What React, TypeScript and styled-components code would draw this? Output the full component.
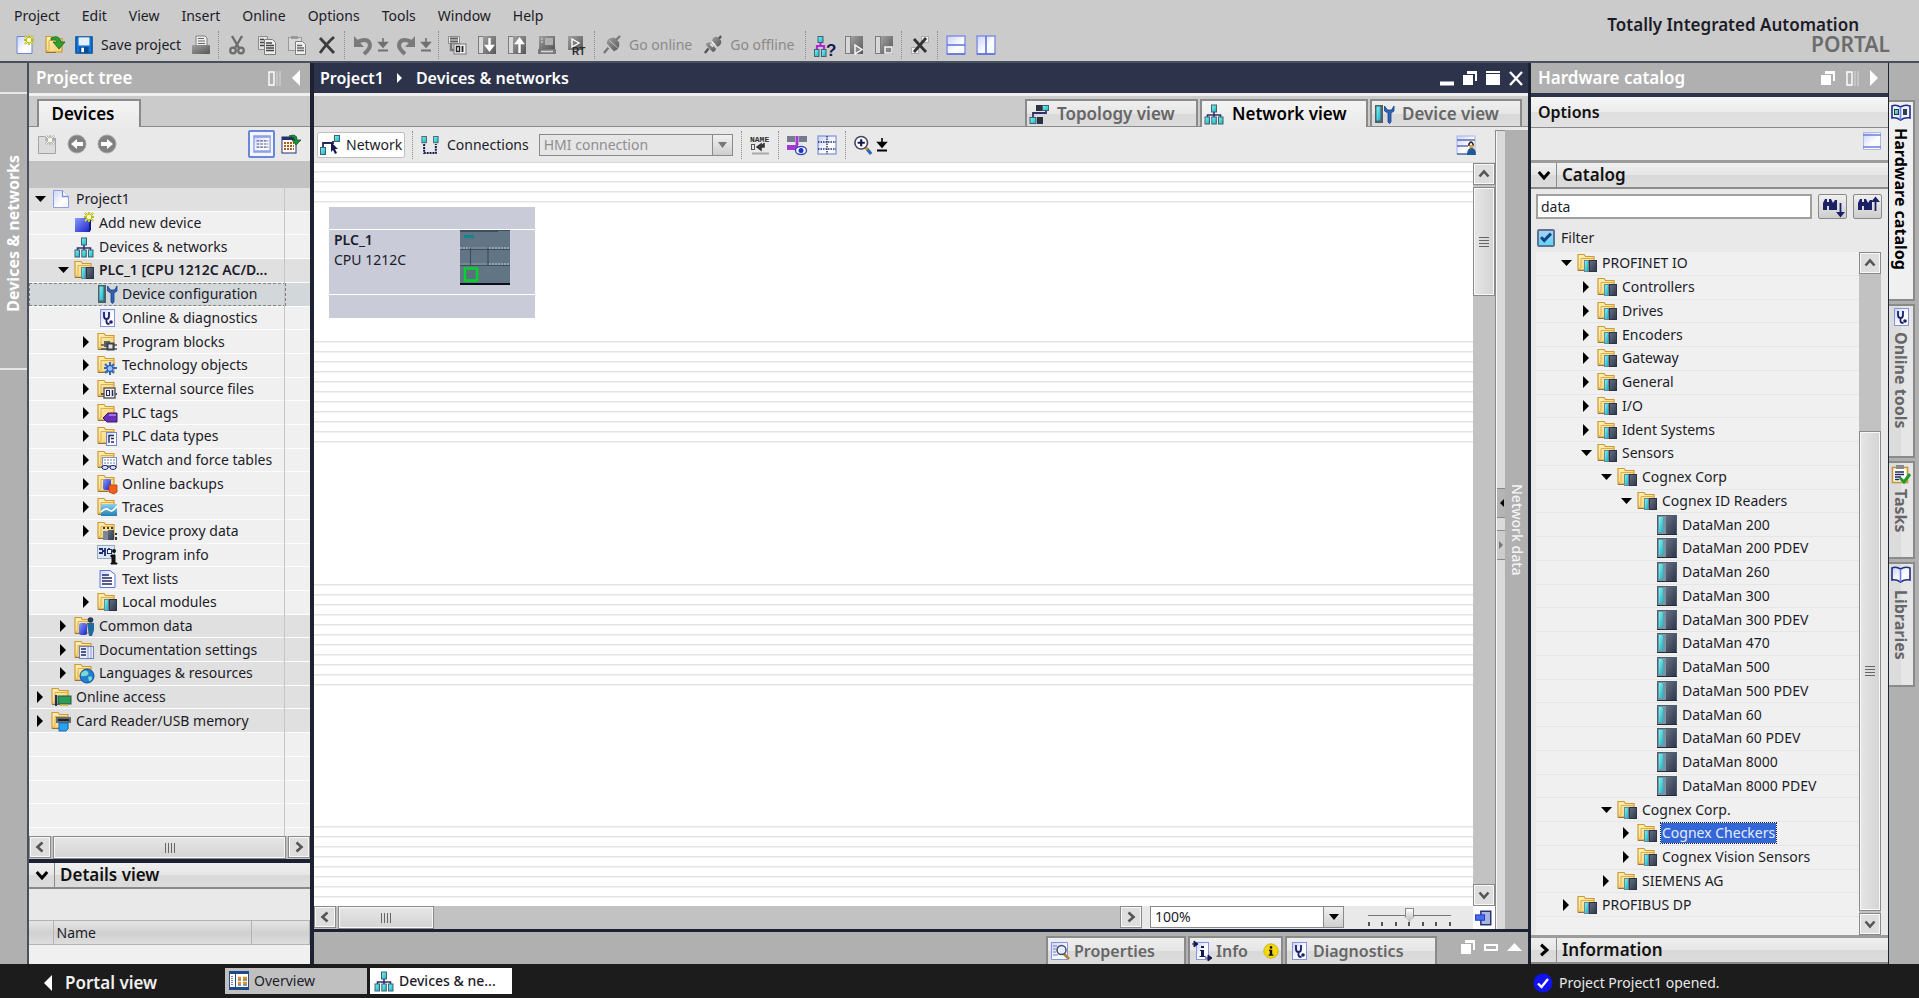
import React from "react";
import styled, { createGlobalStyle, css } from "styled-components";

/* ---------- theme ---------- */
const c = {
  header: "#cbcbcb",
  bar: "#b0b0b0",
  panel: "#e9e9e9",
  row: "#f0f0f0",
  group: "#e0e0e0",
  navy: "#2c334b",
  frame: "#1d2233",
  line: "#8a8a8a",
  ink: "#1c1c28",
  grey: "#666666",
  black: "#1c1c1c",
};

const Global = createGlobalStyle`
  *, *::before, *::after { box-sizing: border-box; }
  html, body, #root { height: 100%; }
  body {
    margin: 0;
    overflow: hidden;
    background: ${c.bar};
    color: ${c.ink};
    font: 14px/20px "Noto Sans", "Open Sans", sans-serif;
  }
  button, input, select { font: inherit; color: inherit; margin: 0; padding: 0; border: 0; background: none; border-radius: 0; }
  ul { list-style: none; margin: 0; padding: 0; }
  h1, h2, p { margin: 0; font-size: 17px; line-height: 22px; font-weight: 600; }
`;

/* ---------- icons ---------- */
const Glyph = styled.svg`
  display: block;
  flex: none;
  overflow: visible;
`;

type IconProps = { w?: number; h?: number; vb?: string; children?: React.ReactNode };
const Icon = ({ w = 20, h = 20, vb, children }: IconProps) => (
  <Glyph width={w} height={h} viewBox={vb ?? `0 0 ${w} ${h}`} aria-hidden="true">
    {children}
  </Glyph>
);

const HiddenDefs = styled.svg`
  position: absolute;
`;

const Defs = () => (
  <HiddenDefs width="0" height="0" aria-hidden="true">
    <defs>
      <linearGradient id="gFolder" x1="0" y1="0" x2="1" y2="1">
        <stop offset="0" stopColor="#fff3b8" />
        <stop offset="1" stopColor="#f5cd6c" />
      </linearGradient>
      <linearGradient id="gCyan" x1="0" y1="0" x2="1" y2="1">
        <stop offset="0" stopColor="#7ff4f4" />
        <stop offset="1" stopColor="#14b4c4" />
      </linearGradient>
      <linearGradient id="gSlate" x1="0" y1="0" x2="1" y2="1">
        <stop offset="0" stopColor="#667085" />
        <stop offset="1" stopColor="#2f3849" />
      </linearGradient>
      <linearGradient id="gGrey" x1="0" y1="0" x2="1" y2="1">
        <stop offset="0" stopColor="#a0a0a0" />
        <stop offset="1" stopColor="#565656" />
      </linearGradient>
      <linearGradient id="gBlue" x1="0" y1="0" x2="1" y2="1">
        <stop offset="0" stopColor="#8b9bff" />
        <stop offset="1" stopColor="#1a23c8" />
      </linearGradient>
      <linearGradient id="gPaper" x1="0" y1="0" x2="1" y2="1">
        <stop offset="0" stopColor="#c9d2fb" />
        <stop offset="0.6" stopColor="#ffffff" />
        <stop offset="1" stopColor="#f2f4ff" />
      </linearGradient>
      <linearGradient id="gSea" x1="0" y1="0" x2="0" y2="1">
        <stop offset="0" stopColor="#8fd0ee" />
        <stop offset="1" stopColor="#1f7fb4" />
      </linearGradient>
    </defs>
  </HiddenDefs>
);

const FolderShape = () => (
  <>
    <path d="M1 17V1.500h6l1.500 2H17V17z" fill="url(#gFolder)" stroke="#cf9a34" strokeWidth="1.200" />
    <path d="M1 17l3-2.500V5.500h12" fill="none" stroke="#dcae4c" />
    <path d="M1 17.500h10" stroke="#8f7440" />
  </>
);
const DeviceMini = () => (
  <>
    <rect x="7" y="7" width="12" height="12" fill="#6f8592" />
    <rect x="8" y="8" width="3" height="10" fill="url(#gCyan)" />
    <rect x="12.500" y="7.500" width="7" height="11" fill="url(#gSlate)" stroke="#2c3342" />
  </>
);
const Spark = ({ x = 14, y = 5, color = "#f4f03a", rim = "#7b8a2a" }: { x?: number; y?: number; color?: string; rim?: string }) => (
  <g transform={`translate(${x} ${y})`}>
    <path d="M0-5V5M-5 0H5M-4-4 4 4M4-4-4 4" stroke={rim} strokeWidth="2" />
    <path d="M0-5V5M-5 0H5M-4-4 4 4M4-4-4 4" stroke={color} strokeWidth="1.200" />
    <circle r="2" fill="#fffde0" />
  </g>
);
const Page = ({ stroke = "#6f86d8" }: { stroke?: string }) => (
  <path d="M2 1.500h10l5 5V18.500H2z" fill="url(#gPaper)" stroke={stroke} />
);
const Steth = () => (
  <>
    <rect x="3.500" y="1.500" width="14" height="17" fill="url(#gPaper)" stroke="#8595dc" />
    <path d="M7 4v4q0 3 2.500 3T12 8V4M9.500 11v3q0 2 3 2" fill="none" stroke="#1a1f66" strokeWidth="1.800" />
    <circle cx="14" cy="14" r="1.800" fill="#1a1f66" />
  </>
);
const NetShape = ({ line = "#31306e" }: { line?: string }) => (
  <>
    <path d="M10 7v4M3.500 14v-3h13v3M10 11v3" fill="none" stroke={line} strokeWidth="1.600" />
    <rect x="7.500" y="1" width="5" height="7" fill="url(#gCyan)" stroke="#43606c" />
    <rect x="1" y="13" width="4.500" height="7" fill="url(#gCyan)" stroke="#43606c" />
    <rect x="7.800" y="13" width="4.500" height="7" fill="url(#gCyan)" stroke="#43606c" />
    <rect x="14.500" y="13" width="4.500" height="7" fill="url(#gCyan)" stroke="#43606c" />
  </>
);
const Wrench = () => (
  <>
    <rect x="1" y="1" width="8" height="18" fill="#4f606c" />
    <rect x="2.500" y="2.500" width="4" height="14" fill="url(#gCyan)" />
    <path d="M10.500 2v5l3.500 2v9q1.500 3 3 0V9l3-2V2l-2.500 4h-4z" fill="#2f63b8" stroke="#1d4080" strokeWidth="0.800" />
  </>
);

const art: Record<string, React.ReactNode> = {
  newDoc: <><Page /><Spark /></>,
  open: (
    <>
      <FolderShape />
      <path d="M6 3q8-4 10 4h4l-6 7-6-7h4q0-3-6-2z" fill="#2fa02f" stroke="#14691a" strokeWidth="0.800" />
    </>
  ),
  save: (
    <>
      <path d="M1 1h18v18H1z" fill="#1277d8" stroke="#0a4d98" strokeWidth="1.500" />
      <rect x="4" y="1.500" width="12" height="9" fill="#e2f0fc" />
      <rect x="5" y="12" width="10" height="7" fill="#0b4a8f" />
      <rect x="7" y="13" width="3" height="5" fill="#fff" />
    </>
  ),
  printer: (
    <>
      <path d="M5 1h9l2 2v8H5z" fill="#ededed" stroke="#808080" />
      <path d="M7 3.500h6M7 6h7M7 8.500h7" stroke="#6a6a6a" strokeWidth="1.200" />
      <rect x="1" y="10" width="18" height="9" rx="1" fill="url(#gGrey)" />
    </>
  ),
  cut: (
    <>
      <path d="M5 1l7 12M15 1L8 13" stroke="#6c6c6c" strokeWidth="2.400" />
      <circle cx="6" cy="15.500" r="2.800" fill="none" stroke="#6c6c6c" strokeWidth="2.200" />
      <circle cx="14" cy="15.500" r="2.800" fill="none" stroke="#6c6c6c" strokeWidth="2.200" />
    </>
  ),
  copy: (
    <>
      <path d="M1.500 1.500h9v13h-9z" fill="#e4e4e4" stroke="#8c8c8c" />
      <path d="M3 4.500h4M3 7.500h4M3 10.500h4" stroke="#444" strokeWidth="1.500" />
      <path d="M7.500 4.500h8l3 3v12h-11z" fill="#ededed" stroke="#7c7c7c" />
      <path d="M9 8h6M9 10.500h8M9 13h8M9 15.500h8" stroke="#444" strokeWidth="1.400" />
    </>
  ),
  paste: (
    <>
      <rect x="1.500" y="2.500" width="13" height="13" fill="#d8d8d8" stroke="#9a9a9a" />
      <rect x="4" y="1" width="7" height="3" fill="#999" />
      <path d="M8.500 6.500h7l3 3v10h-10z" fill="#efefef" stroke="#808080" />
      <path d="M10 10.500h5M10 13h7M10 15.500h7" stroke="#666" strokeWidth="1.400" />
    </>
  ),
  cross: <path d="M3 3l14 15M17 2Q10 8 3 18" stroke="#3c3c3c" strokeWidth="2.800" fill="none" />,
  compile: (
    <>
      <path d="M1.500 1.500h11v7h-11z" fill="#ececec" stroke="#8a8a8a" />
      <path d="M3 3.500h8M3 6.500h8" stroke="#5f5f5f" strokeWidth="1.800" />
      <path d="M4 8v7h3" fill="none" stroke="#777" strokeWidth="2.400" />
      <rect x="7" y="9" width="12" height="10" fill="#f0f0f0" stroke="#777" />
      <rect x="9.500" y="11.500" width="3" height="5" fill="none" stroke="#222" strokeWidth="1.400" />
      <path d="M15.500 11v6" stroke="#222" strokeWidth="1.800" />
    </>
  ),
  download: (
    <>
      <rect x="1.500" y="1.500" width="5" height="17" fill="#d8d8d8" stroke="#7c7c7c" />
      <rect x="6" y="1" width="13" height="18" fill="url(#gGrey)" />
      <path d="M12.500 3v9M9.500 11h6l-3 4z" fill="#fff" stroke="#fff" strokeWidth="2.400" />
    </>
  ),
  upload: (
    <>
      <rect x="1.500" y="1.500" width="5" height="17" fill="#d8d8d8" stroke="#7c7c7c" />
      <rect x="6" y="1" width="13" height="18" fill="url(#gGrey)" />
      <path d="M12.500 7v11M9.500 8h6l-3-4z" fill="#fff" stroke="#fff" strokeWidth="2.400" />
    </>
  ),
  sim: (
    <>
      <rect x="2" y="1" width="16" height="13" fill="url(#gGrey)" />
      <rect x="8" y="3" width="8" height="7" fill="#b0b0b0" />
      <path d="M4 4h2M4 7h2" stroke="#ddd" />
      <rect x="1" y="14" width="18" height="5" fill="#7a7a7a" />
      <path d="M4 16.500h12" stroke="#d8d8d8" strokeWidth="1.500" />
    </>
  ),
  rt: (
    <>
      <rect x="1" y="1" width="15" height="14" fill="url(#gGrey)" />
      <path d="M5 4l7 4-7 4z" fill="none" stroke="#fff" strokeWidth="1.400" />
      <text x="5" y="20" fontFamily="Liberation Sans, sans-serif" fontWeight="700" fontSize="10" fill="#2c2c2c">RT</text>
    </>
  ),
  plug: (
    <>
      <path d="M1 19l5-6M14 5l5-5" stroke="#777" strokeWidth="2.600" />
      <path d="M4 8l8 9q7-2 6-10L13 2Q5 1 4 8z" fill="url(#gGrey)" />
      <path d="M7 5l9 8" stroke="#d0d0d0" />
    </>
  ),
  unplug: (
    <>
      <path d="M1 19l4-5M15 5l4-5" stroke="#555" strokeWidth="2.600" />
      <path d="M2 10l8 8q4-2 3-4L7 7q-5 0-5 3z" fill="url(#gGrey)" />
      <path d="M9 5l6 7q5-2 4-7l-4-4q-5-1-6 4z" fill="url(#gGrey)" />
      <path d="M7 9l3 3M9 7l3 3" stroke="#efefef" strokeWidth="1.600" />
    </>
  ),
  netHelp: (
    <>
      <path d="M6.500 7v4M3 15v-4h7v3" fill="none" stroke="#b026d8" strokeWidth="2.200" />
      <rect x="4" y="1.500" width="5" height="6" fill="url(#gCyan)" stroke="#43606c" />
      <rect x="0.500" y="14.500" width="4.500" height="7" fill="url(#gCyan)" stroke="#43606c" />
      <rect x="7.500" y="14.500" width="4.500" height="7" fill="url(#gCyan)" stroke="#43606c" />
      <text x="12" y="21" fontFamily="Liberation Sans, sans-serif" fontWeight="700" fontSize="17" fill="#171a52">?</text>
    </>
  ),
  start: (
    <>
      <rect x="1.500" y="1.500" width="5" height="17" fill="#d8d8d8" stroke="#7c7c7c" />
      <rect x="7" y="1" width="12" height="18" fill="url(#gGrey)" />
      <path d="M11 10l7 4.500-7 4.500z" fill="#888" stroke="#fff" strokeWidth="1.400" />
    </>
  ),
  stop: (
    <>
      <rect x="1.500" y="1.500" width="5" height="17" fill="#d8d8d8" stroke="#7c7c7c" />
      <rect x="7" y="1" width="12" height="18" fill="url(#gGrey)" />
      <rect x="11" y="12" width="7" height="6" fill="#888" stroke="#fff" strokeWidth="1.400" />
    </>
  ),
  crossRef: (
    <>
      <rect x="11.500" y="1.500" width="7" height="6" fill="#eee" stroke="#aaa" />
      <rect x="1.500" y="12.500" width="7" height="6" fill="#eee" stroke="#aaa" />
      <path d="M4 4l12 13M16 3L4 17" stroke="#333" strokeWidth="2.800" />
    </>
  ),
  splitH: <><rect x="1" y="1" width="18" height="18" fill="url(#gPaper)" stroke="#7d8ee0" strokeWidth="1.400" /><path d="M1 10h18M1 19h18" stroke="#5a70e0" strokeWidth="1.600" /></>,
  splitV: <><rect x="1" y="1" width="18" height="18" fill="url(#gPaper)" stroke="#7d8ee0" strokeWidth="1.400" /><path d="M10 1v18M1 19h18" stroke="#5a70e0" strokeWidth="1.600" /></>,
  topo: (
    <>
      <path d="M4 14V9h13V6" fill="none" stroke="#31306e" strokeWidth="1.800" />
      <rect x="7" y="1" width="6" height="6" fill="#2b3340" />
      <rect x="13.500" y="1.500" width="6" height="5" fill="url(#gCyan)" stroke="#43606c" />
      <rect x="1" y="13.500" width="6" height="6" fill="url(#gCyan)" stroke="#43606c" />
      <rect x="8" y="13" width="6" height="7" fill="#2b3340" />
    </>
  ),
  net: <NetShape />,
  wrench: <Wrench />,
  netCursor: (
    <>
      <path d="M3 12V8h10V6" fill="none" stroke="#24275e" strokeWidth="1.800" />
      <rect x="14.500" y="0.500" width="5" height="6" fill="url(#gCyan)" stroke="#43606c" />
      <rect x="0.500" y="12.500" width="5" height="7" fill="url(#gCyan)" stroke="#43606c" />
      <path d="M11 7l7 7h-3l2 4-2 1-2-4-2 2z" fill="#171a52" />
    </>
  ),
  conn: (
    <>
      <rect x="1" y="0.500" width="5" height="7" fill="url(#gCyan)" stroke="#43606c" />
      <rect x="14" y="0.500" width="5" height="7" fill="url(#gCyan)" stroke="#43606c" />
      <path d="M3.500 9v10h13V9" fill="none" stroke="#171a52" strokeWidth="2.200" strokeDasharray="2.200 1" />
    </>
  ),
  nameTag: (
    <>
      <text x="0" y="7" fontFamily="Liberation Mono, monospace" fontWeight="700" fontSize="8" fill="#333">NAME</text>
      <rect x="1.500" y="9.500" width="3" height="5" fill="none" stroke="#555" />
      <path d="M14 8v4H8M11 9l-4 3 4 3z" fill="#333" stroke="#333" strokeWidth="1.500" />
      <path d="M2 18.500h17" stroke="#aaa" strokeWidth="2" />
    </>
  ),
  addr: (
    <>
      <rect x="0" y="1" width="8" height="6" fill="#767b90" />
      <rect x="12" y="1" width="8" height="6" fill="#767b90" />
      <path d="M10 1v9" stroke="#a03ad0" strokeWidth="3" />
      <rect x="0" y="10" width="11" height="5" fill="#a03ad0" />
      <ellipse cx="14" cy="15.500" rx="5.500" ry="4" fill="#fff" stroke="#3a4ab0" strokeWidth="1.400" />
      <circle cx="14" cy="15.500" r="2.500" fill="#1b35c8" />
    </>
  ),
  pageBreak: (
    <>
      <rect x="1" y="1" width="18" height="18" fill="url(#gPaper)" stroke="#8d9cdc" strokeWidth="1.400" />
      <path d="M1 7h18M1 14h18M10 1v18" stroke="#22306e" strokeWidth="1.400" strokeDasharray="1.500 1" />
    </>
  ),
  zoom: (
    <>
      <path d="M14 14l5 6" stroke="#2b6ab0" strokeWidth="3.500" />
      <path d="M12 12l3 3" stroke="#d89a2a" strokeWidth="3.500" />
      <circle cx="8" cy="7.500" r="7" fill="#fff" stroke="#44475e" strokeWidth="1.800" />
      <path d="M8 3.500v8M4 7.500h8" stroke="#171a52" strokeWidth="2.400" />
    </>
  ),
  lockTable: (
    <>
      <rect x="1" y="1" width="18" height="18" fill="url(#gPaper)" stroke="#aab4e6" />
      <path d="M1 5h18M1 11h11M1 19h18" stroke="#5f6cb0" strokeWidth="1.300" />
      <path d="M13 11v-2q2-4 4 0v2" fill="none" stroke="#222" strokeWidth="1.600" />
      <circle cx="15.500" cy="12" r="2.200" fill="#e0a040" />
      <path d="M11 20q0-7 4.500-7t4.500 7z" fill="#1f5a96" />
    </>
  ),
  newGrey: (
    <>
      <path d="M1.500 2.500h6l2 2h9v15h-17z" fill="#dcdcdc" stroke="#a4a4a4" />
      <Spark x={13} y={6} color="#f4f4f4" rim="#777" />
    </>
  ),
  back: <><circle cx="10" cy="10" r="9" fill="#808080" stroke="#a6a6a6" /><path d="M4 10l6-5v3h6v4h-6v3z" fill="#fff" /></>,
  fwd: <><circle cx="10" cy="10" r="9" fill="#808080" stroke="#a6a6a6" /><path d="M16 10l-6-5v3H4v4h6v3z" fill="#fff" /></>,
  details: (
    <>
      <rect x="1" y="1" width="18" height="18" fill="url(#gPaper)" stroke="#8d9cdc" strokeWidth="1.400" />
      <path d="M1 2h18M1 18h18" stroke="#8fa0e8" strokeWidth="2" />
      <path d="M4 6.500h13M4 10h13M4 13.500h13" stroke="#55598a" strokeWidth="1.300" strokeDasharray="3 1" />
    </>
  ),
  gotoTable: (
    <>
      <rect x="1" y="3" width="14" height="16" fill="#fff" stroke="#22306e" />
      <rect x="1" y="3" width="14" height="3" fill="#22306e" />
      <path d="M3 9h10M3 12h10M3 15h10" stroke="#b05a1a" strokeWidth="2" strokeDasharray="2 1" />
      <path d="M8 2q8-3 8 4h4l-5 5-4-5h3q0-3-6-4z" fill="#1f8f3a" stroke="#0f5f22" strokeWidth="0.800" />
    </>
  ),
  project: <><path d="M2.500 1.500h9l6 6V18.500h-15z" fill="url(#gPaper)" stroke="#8f9fe0" /><path d="M11.500 1.500v6h6" fill="#fff" stroke="#7c8fe0" strokeWidth="1.300" /></>,
  addDevice: <><path d="M1 5h15v14H1z" fill="url(#gBlue)" /><path d="M15 5l2-1v13l-2 2z" fill="#101a80" /><Spark x={15} y={4} /></>,
  steth: <Steth />,
  plcFolder: <><FolderShape /><DeviceMini /></>,
  fBlocks: <><FolderShape /><path d="M4 13h16M4 17h16" stroke="#50565f" strokeWidth="1.500" /><rect x="7" y="9" width="6" height="6" fill="#5c646e" /><rect x="10.500" y="11.500" width="6" height="6" fill="#e0e4e8" stroke="#3c434c" strokeWidth="2" /></>,
  fTech: <><FolderShape /><path d="M13 7v13M7 13h13M8 9l9 9M17 9l-9 9" stroke="#2a6ad8" strokeWidth="2" /><circle cx="13" cy="13.500" r="3" fill="#8fc0f8" stroke="#1c50b0" /></>,
  fExt: <><FolderShape /><path d="M4 15h16" stroke="#555" strokeWidth="2" /><rect x="7" y="9" width="11" height="10" fill="#eee" stroke="#555" strokeWidth="1.400" /><rect x="9.500" y="11.500" width="3" height="5" fill="none" stroke="#222a5e" /><path d="M15.500 11v6" stroke="#222a5e" strokeWidth="1.500" /></>,
  fTags: <><FolderShape /><path d="M6 15l5-5h9v9H10z" fill="#6a2fb8" stroke="#3a1470" /><path d="M12 12h7" stroke="#b58cf0" strokeWidth="1.500" /></>,
  fTypes: <><FolderShape /><rect x="9.500" y="6.500" width="10" height="13" fill="url(#gPaper)" stroke="#7486d0" /><path d="M12 9v8M12 9.500h5M14 12.500h3M14 16h3" stroke="#222a5e" strokeWidth="1.400" /></>,
  fWatch: <><FolderShape /><rect x="5.500" y="7.500" width="14" height="8" fill="#fff" stroke="#8090c8" /><path d="M7 10h11M7 13h11" stroke="#7080a8" strokeDasharray="2 1" /><path d="M4 17h16" stroke="#1f2a70" /><ellipse cx="8" cy="17.500" rx="3" ry="2" fill="#dfe6ff" stroke="#1f2a70" /><ellipse cx="16" cy="17.500" rx="3" ry="2" fill="#dfe6ff" stroke="#1f2a70" /></>,
  fBackup: <><FolderShape /><rect x="6" y="5" width="8" height="11" rx="2" fill="url(#gBlue)" /><path d="M12 11h8v7l-3 2-5-2z" fill="#f0601a" stroke="#b03c08" strokeWidth="0.800" /></>,
  fTrace: <><FolderShape /><rect x="4" y="7" width="16" height="12" fill="url(#gSea)" /><path d="M4 15q5-5 8-2t8-4" fill="none" stroke="#fff" strokeWidth="1.600" /></>,
  fProxy: <><FolderShape /><path d="M6 7h12" stroke="#3a3a3a" strokeWidth="2" strokeDasharray="2 2" /><rect x="6" y="10" width="5" height="9" fill="#7c8894" /><rect x="11" y="9" width="6" height="10" fill="url(#gSlate)" /><path d="M19 12v2M19 16v3" stroke="#333" strokeWidth="2" /></>,
  progInfo: <><rect x="0.500" y="0.500" width="17" height="13" fill="#dbe6fb" stroke="#9ab" /><path d="M2 4h4M2 8h4M8 3v8M12 3v6M5 6h3" stroke="#1f2a70" strokeWidth="1.800" /><rect x="10.500" y="4.500" width="4" height="4" fill="#fff" stroke="#1f2a70" /><circle cx="17" cy="6" r="2" fill="#111" /><path d="M14 10h4v8h2v1h-6v-1h1v-6h-1z" fill="#111" stroke="#111" /></>,
  textList: <><path d="M3 1.500h10l5 4V18.500H3z" fill="url(#gPaper)" stroke="#5f76d8" /><path d="M5 6h7M5 9h10M5 12h10M5 15h10" stroke="#222a5e" strokeWidth="1.600" /></>,
  fCommon: <><FolderShape /><rect x="5" y="7" width="8" height="12" rx="2" fill="url(#gBlue)" /><circle cx="16.500" cy="4" r="2.800" fill="#2a3a5a" /><path d="M13 7h7v7l-2 6h-3z" fill="#1f6aa0" /></>,
  fDoc: <><FolderShape /><rect x="5.500" y="6.500" width="14" height="12" fill="#e8ecfb" stroke="#7080b8" /><path d="M7 9h5M7 12h5M7 15h5" stroke="#1f2a60" strokeWidth="1.600" /><path d="M14 7v11M17 7v11" stroke="#8c9ccc" /></>,
  fLang: <><FolderShape /><circle cx="13" cy="13" r="7" fill="#1f7fd8" stroke="#0f4f98" /><path d="M8 9q4-3 6 0t-3 4-4-2zM14 14q4-2 4 1t-3 3z" fill="#7fd8c8" /></>,
  fOnline: <><FolderShape /><path d="M5 8v11" stroke="#222a70" strokeWidth="2" /><rect x="7" y="9" width="13" height="8" fill="#2f9a5a" stroke="#1a6038" /><path d="M9 18h9" stroke="#c8b040" strokeWidth="2" strokeDasharray="2 1" /></>,
  fCard: <><FolderShape /><rect x="5" y="6" width="15" height="6" fill="#5f6b78" /><path d="M7 9h11" stroke="#222" strokeWidth="2" /><path d="M8 12h9v6l-2 2H8z" fill="#2aa0f0" stroke="#1270b8" /></>,
  device: (
    <>
      <rect x="0.500" y="0.500" width="19" height="19" fill="#7b92a0" stroke="#4d5f6c" />
      <rect x="2" y="2" width="4" height="15" fill="url(#gCyan)" />
      <rect x="9" y="1" width="10" height="18" fill="url(#gSlate)" />
      <path d="M0 19.500h20" stroke="#222936" />
    </>
  ),
  window: <><rect x="1.500" y="1.500" width="17" height="17" fill="url(#gPaper)" stroke="#b0bae8" /><path d="M1 4h18M1 16h18" stroke="#6d80d8" strokeWidth="1.500" /></>,
  props: <><path d="M1.500 1.500h16v17h-16z" fill="url(#gPaper)" stroke="#8595dc" /><path d="M3 5h4M3 8h3M3 11h3M3 14h5" stroke="#6a7ab8" /><path d="M14 13l5 5" stroke="#b08030" strokeWidth="2.500" /><circle cx="11.500" cy="9" r="4.500" fill="#e8eefc" stroke="#444a70" strokeWidth="1.500" /></>,
  info: <><rect x="4.500" y="1.500" width="12" height="17" fill="url(#gPaper)" stroke="#8595dc" /><path d="M0 3h4M2 0l4 3-4 3zM13 17h4M16 14l4 3-4 3z" fill="#171a52" stroke="#171a52" /><rect x="9" y="5" width="3" height="2" fill="#171a52" /><path d="M8 9h4v6h1.500v1H7.500v-1H9v-5H8z" fill="#171a52" /></>,
  infoBadge: <><circle cx="10" cy="10" r="9" fill="#f5d90a" stroke="#c8a800" /><rect x="8.500" y="4" width="3" height="3" fill="#111" /><path d="M7.500 8.500h4v6H13v1.500H7v-1.500h1.500V10h-1z" fill="#111" /></>,
  overview: <><rect x="0.500" y="0.500" width="19" height="18" fill="#fff" stroke="#2a4a80" /><rect x="0" y="0" width="20" height="3" fill="#1f4a8a" /><rect x="0" y="16" width="20" height="3" fill="#1f4a8a" /><path d="M3 5v10" stroke="#7080b8" strokeWidth="2" strokeDasharray="1 1" /><path d="M6.500 3v13" stroke="#2a4a80" /><path d="M9 7h3M14 7h4M9 12h3M14 12h4" stroke="#e09020" strokeWidth="2.500" /><path d="M9 9h3M14 9h4M9 14h3M14 14h4" stroke="#2c3350" strokeWidth="1.200" /></>,
  openBook: <><path d="M1 3q4-2 8.500 1Q14 1 19 3v12q-5-1-9.500 2Q5 14 1 15z" fill="url(#gPaper)" stroke="#20308a" strokeWidth="1.600" /><path d="M9.500 4v13" stroke="#6a80f0" strokeWidth="1.600" /></>,
  hwBook: <><path d="M1 3q4-2 8.500 1Q14 1 19 3v12q-5-1-9.500 2Q5 14 1 15z" fill="#eef1ff" stroke="#20308a" strokeWidth="1.600" /><path d="M9.500 4v13" stroke="#6a80f0" strokeWidth="1.600" /><rect x="3.500" y="6.500" width="4" height="5" fill="url(#gCyan)" stroke="#333" /><rect x="12" y="6" width="4" height="6" fill="#333c50" /></>,
  tasks: <><rect x="1.500" y="3.500" width="15" height="15" fill="#fff" stroke="#c8962e" strokeWidth="1.600" /><rect x="5" y="1" width="8" height="4" fill="#8a8a8a" /><path d="M4 8h9M4 10.500h9M4 13h6M4 15.500h4" stroke="#222a5e" strokeWidth="1.600" /><path d="M9 14l4 4 6-8" fill="none" stroke="#1f9a2f" strokeWidth="3" /></>,
  searchDown: <><path d="M0 6l2-4h2v3h2V2h2l2 4v7H6V9H4v4H0zM10 6l2-3h2v10h-4z" fill="#1c2166" /><path d="M17.500 6v10M15 16h5l-2.500 3z" fill="#1c2166" stroke="#1c2166" strokeWidth="1.800" /></>,
  searchUp: <><path d="M0 6l2-4h2v3h2V2h2l2 4v7H6V9H4v4H0zM10 6l2-3h2v10h-4z" fill="#1c2166" /><path d="M17.500 4v10M15 4h5l-2.500-3z" fill="#1c2166" stroke="#1c2166" strokeWidth="1.800" /></>,
  ok: <><circle cx="10" cy="10" r="9.500" fill="#1212f0" /><path d="M5 10.500l3.500 3.500L15 6" fill="none" stroke="#fff" strokeWidth="2.400" /></>,
  overviewPane: <><rect x="6.500" y="2.500" width="11" height="15" fill="#a9b4e0" stroke="#22306e" strokeWidth="1.600" /><rect x="0.500" y="6.500" width="10" height="6" fill="#4a6af0" stroke="#1a35c0" /></>,
};

const Art = ({ name, w = 20 }: { name: string; w?: number }) => (
  <Icon w={w} h={w} vb="0 0 20 20">{art[name]}</Icon>
);

const Undo = ({ flip }: { flip?: boolean }) => (
  <Icon>
    <g transform={flip ? "translate(20 0) scale(-1 1)" : undefined}>
      <path d="M4 7q12-5 13 3 0 4-6 9" fill="none" stroke="#7a7a7a" strokeWidth="4" />
      <path d="M1 1v11h10z" fill="#7a7a7a" />
    </g>
  </Icon>
);
const DropMark = ({ color = "#707070" }: { color?: string }) => (
  <Icon w={10} h={14}>
    <path d="M5 0v5M1 4.500h8L5 9z" fill={color} stroke={color} strokeWidth="1.600" />
    <path d="M0 12.500h10" stroke={color} strokeWidth="2" />
  </Icon>
);
const TriRight = () => <Icon w={6} h={12}><path d="M0 0l6 6-6 6z" fill="#000" /></Icon>;
const TriDown = () => <Icon w={11} h={6}><path d="M0 0h11L5.500 6z" fill="#000" /></Icon>;
const TriLeftWhite = () => <Icon w={8} h={16}><path d="M8 0v16L0 8z" fill="#fff" /></Icon>;
const TriRightWhite = () => <Icon w={8} h={16}><path d="M0 0v16l8-8z" fill="#fff" /></Icon>;
const turn = { up: 180, down: 0, left: 90, right: 270 };
const Chevron = ({ dir, color = "#555", w = 12 }: { dir: keyof typeof turn; color?: string; w?: number }) => (
  <Icon w={w} h={w} vb="0 0 12 12">
    <path d="M1.500 3.500L6 8.500l4.500-5" fill="none" stroke={color} strokeWidth="2.600" transform={`rotate(${turn[dir]} 6 6)`} />
  </Icon>
);
const Cascade = () => (
  <Icon w={14} h={15}>
    <path d="M4 0h10v10h-2V3H4z" fill="#fff" />
    <rect x="0" y="4" width="10" height="10" fill="#fff" />
  </Icon>
);
const Columns = () => (
  <Icon w={13} h={15}>
    <path d="M1 1h5v13H1z" fill="none" stroke="#fff" strokeWidth="1.400" />
    <path d="M9 0v15M12 0v15" stroke="#d8d8d8" />
  </Icon>
);

/* ---------- shared parts ---------- */
const Shell = styled.div`
  height: 100vh;
  display: flex;
  flex-direction: column;
`;
const PlainButton = styled.button<{ $w?: number }>`
  display: flex;
  align-items: center;
  justify-content: center;
  flex: none;
  gap: 8px;
  min-width: ${(p) => (p.$w ? `${p.$w}px` : "auto")};
  white-space: nowrap;
`;
const Spacer = styled.div`
  flex: 1;
`;
const barFill = css`
  background: linear-gradient(#efefef, #e6e6e6 50%, #d9d9d9 51%, #dcdcdc);
`;

/* ---------- top area ---------- */
const Header = styled.header`
  height: 63px;
  flex: none;
  display: flex;
  justify-content: space-between;
  background: ${c.header};
  border-bottom: 2px solid #4a4f5e;
`;
const MenuBar = styled.nav`
  display: flex;
  gap: 22px;
  height: 31px;
  padding-left: 14px;
`;
const ToolRow = styled.div`
  display: flex;
  align-items: center;
  height: 28px;
  padding-left: 15px;
`;
const ToolGroup = styled.div<{ $gap?: number; $first?: boolean; $end?: number }>`
  display: flex;
  align-items: center;
  height: 28px;
  gap: ${(p) => p.$gap ?? 10}px;
  padding: 0 ${(p) => p.$end ?? 7}px 0 ${(p) => (p.$first ? 0 : 8)}px;
  border-left: ${(p) => (p.$first ? "0" : "1px dotted #8c8c8c")};
`;
const MutedButton = styled(PlainButton)`
  color: #8a8a8a;
`;
const DropPair = styled.div`
  display: flex;
  align-items: center;
  gap: 5px;
`;
const Brand = styled.div`
  display: flex;
  flex-direction: column;
  padding: 15px 29px 0 0;
  text-align: right;
`;
const BrandName = styled.p`
  padding-right: 31px;
  line-height: 20px;
`;
const BrandPortal = styled.p`
  font-size: 21px;
  line-height: 18px;
  color: #6c6c6c;
`;

const TopArea = () => (
  <Header>
    <div>
      <MenuBar aria-label="Main menu">
        {["Project", "Edit", "View", "Insert", "Online", "Options", "Tools", "Window", "Help"].map((m) => (
          <PlainButton key={m}>{m}</PlainButton>
        ))}
      </MenuBar>
      <ToolRow>
        <ToolGroup $first>
          <PlainButton aria-label="New project"><Art name="newDoc" /></PlainButton>
          <PlainButton aria-label="Open project"><Art name="open" /></PlainButton>
          <PlainButton><Art name="save" w={18} />Save project</PlainButton>
          <PlainButton aria-label="Print"><Art name="printer" /></PlainButton>
        </ToolGroup>
        <ToolGroup>
          {["cut", "copy", "paste", "cross"].map((n) => (
            <PlainButton key={n} aria-label={n}><Art name={n} /></PlainButton>
          ))}
        </ToolGroup>
        <ToolGroup $gap={8}>
          <DropPair>
            <PlainButton aria-label="Undo"><Undo /></PlainButton>
            <PlainButton aria-label="Undo list"><DropMark /></PlainButton>
          </DropPair>
          <DropPair>
            <PlainButton aria-label="Redo"><Undo flip /></PlainButton>
            <PlainButton aria-label="Redo list"><DropMark /></PlainButton>
          </DropPair>
        </ToolGroup>
        <ToolGroup>
          {["compile", "download", "upload", "sim", "rt"].map((n) => (
            <PlainButton key={n} aria-label={n}><Art name={n} /></PlainButton>
          ))}
        </ToolGroup>
        <ToolGroup $gap={12} $end={11}>
          <MutedButton><Art name="plug" w={18} />Go online</MutedButton>
          <MutedButton><Art name="unplug" w={18} />Go offline</MutedButton>
        </ToolGroup>
        <ToolGroup>
          {["netHelp", "start", "stop"].map((n) => (
            <PlainButton key={n} aria-label={n}><Art name={n} /></PlainButton>
          ))}
        </ToolGroup>
        <ToolGroup>
          <PlainButton aria-label="Cross-references"><Art name="crossRef" /></PlainButton>
        </ToolGroup>
        <ToolGroup>
          <PlainButton aria-label="Split horizontally"><Art name="splitH" /></PlainButton>
          <PlainButton aria-label="Split vertically"><Art name="splitV" /></PlainButton>
        </ToolGroup>
      </ToolRow>
    </div>
    <Brand>
      <BrandName>Totally Integrated Automation</BrandName>
      <BrandPortal>PORTAL</BrandPortal>
    </Brand>
  </Header>
);

/* ---------- frame ---------- */
const Work = styled.div`
  flex: 1;
  min-height: 0;
  display: flex;
`;
const LeftRail = styled.aside`
  width: 29px;
  flex: none;
  display: flex;
  flex-direction: column;
  background: ${c.bar};
  border-right: 2px solid #4a4f5e;
`;
const RailCap = styled.div`
  height: 31px;
  flex: none;
  border-bottom: 2px solid #e6e6e6;
`;
const RailTab = styled.button`
  height: 276px;
  display: flex;
  align-items: center;
  justify-content: center;
  padding: 4px 2px 0 0;
  border-bottom: 2px solid #e6e6e6;
`;
const RailText = styled.span`
  writing-mode: vertical-rl;
  transform: rotate(180deg);
  font-size: 16px;
  line-height: 22px;
  font-weight: 700;
  color: #fff;
`;
const PanelTitle = styled.div<{ $active?: boolean }>`
  height: 30px;
  flex: none;
  display: flex;
  align-items: center;
  gap: 11px;
  padding: 0 ${(p) => (p.$active ? 5 : 10)}px 0 ${(p) => (p.$active ? 6 : 7)}px;
  color: #fff;
  background: ${(p) => (p.$active ? c.navy : c.bar)};
`;
const TabStrip = styled.div`
  height: 34px;
  flex: none;
  display: flex;
  align-items: flex-end;
  background: ${c.header};
  border-top: 3px solid #efefef;
  border-bottom: 1px solid ${c.line};
`;
const Tab = styled.button<{ $active?: boolean; $w?: number; $tool?: boolean }>`
  height: ${(p) => (p.$tool ? 28 : 27)}px;
  width: ${(p) => (p.$w ? `${p.$w}px` : "auto")};
  display: flex;
  align-items: center;
  gap: ${(p) => (p.$tool ? 4 : 8)}px;
  padding: 0 2px;
  font-size: ${(p) => (p.$tool ? 16 : 17)}px;
  line-height: 22px;
  font-weight: 600;
  white-space: nowrap;
  color: ${(p) => (p.$active ? "#000" : c.grey)};
  border: 2px solid ${c.line};
  border-bottom: 0;
  ${barFill}
  ${(p) => p.$active && css`
    background: linear-gradient(#f4f4f4, ${c.panel});
    height: 28px;
    margin-bottom: -1px;
  `}
`;

/* ---------- scrollbars ---------- */
const metal = css`
  border: 1px solid ${c.line};
  box-shadow: inset 0 0 0 1px #f8f8f8;
  background: #dedede;
`;
const ScrollTrack = styled.div<{ $v?: boolean }>`
  display: flex;
  flex-direction: ${(p) => (p.$v ? "column" : "row")};
  gap: 2px;
  flex: none;
  background: #c2c2c2;
  ${(p) => (p.$v ? "width: 22px;" : "height: 23px;")}
`;
const ScrollButton = styled.button`
  width: 22px;
  height: 22px;
  flex: none;
  display: flex;
  align-items: center;
  justify-content: center;
  ${metal}
`;
const Thumb = styled.div<{ $grow: number; $v?: boolean }>`
  flex: ${(p) => p.$grow} 1 0;
  display: flex;
  align-items: center;
  justify-content: center;
  ${metal}
  background: linear-gradient(${(p) => (p.$v ? "90deg" : "180deg")}, #e6e6e6, #d4d4d4);
`;
const Rest = styled.div<{ $grow: number }>`
  flex: ${(p) => p.$grow} 1 0;
`;
const Grip = ({ v }: { v?: boolean }) => (
  <Icon w={10} h={10}>
    <path
      d={v ? "M0 .5h10M0 3.500h10M0 6.500h10M0 9.500h10" : "M.5 0v10M3.500 0v10M6.500 0v10M9.500 0v10"}
      stroke="#666"
    />
  </Icon>
);

/* ---------- trees ---------- */
type Node = { t: string; lvl: number; icon: string; exp?: "open" | "shut"; group?: boolean; bold?: boolean; sel?: boolean };

const Rows = styled.ul<{ $count: number; $tail: number }>`
  flex: 1;
  min-width: 0;
  min-height: 0;
  overflow: hidden;
  display: grid;
  grid-template-rows: repeat(${(p) => p.$count}, minmax(0, 1fr)) ${(p) => p.$tail}px;
  background: ${c.row};
`;
const Row = styled.li<{ $base: number; $step: number; $lvl: number; $group?: boolean; $sel?: boolean; $soft?: boolean }>`
  display: flex;
  align-items: center;
  min-width: 0;
  padding-left: ${(p) => p.$base + p.$step * p.$lvl}px;
  white-space: nowrap;
  background: ${(p) => (p.$sel ? "#d2d7da" : p.$group ? c.group : "transparent")};
  border-bottom: ${(p) => (p.$soft ? "1px solid #e6e6e6" : "1px solid #fcfcfc")};
  ${(p) => p.$sel && css`
    position: relative;
    &::after {
      content: "";
      position: absolute;
      inset: 0 24px 0 0;
      border: 1px dashed #808080;
    }
  `}
`;
const Expander = styled.button`
  width: 16px;
  height: 18px;
  flex: none;
  display: flex;
  align-items: center;
  justify-content: center;
  margin-right: 3px;
`;
const RowLabel = styled.span<{ $bold?: boolean; $hot?: boolean }>`
  margin-left: 4px;
  padding: 0 1px;
  font-weight: ${(p) => (p.$bold ? 600 : 400)};
  ${(p) => p.$hot && css`
    background: #3366d6;
    color: #e6ecff;
    outline: 1px dotted #1c2a50;
  `}
`;
const TreeRow = ({ n, base, step, soft }: { n: Node; base: number; step: number; soft?: boolean }) => (
  <Row role="treeitem" $base={base} $step={step} $lvl={n.lvl} $group={n.group} $sel={n.sel && !soft} $soft={soft}>
    <Expander aria-label={n.exp ? `Toggle ${n.t}` : undefined} tabIndex={n.exp ? 0 : -1}>
      {n.exp === "open" && <TriDown />}
      {n.exp === "shut" && <TriRight />}
    </Expander>
    <Art name={n.icon} />
    <RowLabel $bold={n.bold} $hot={n.sel && soft}>{n.t}</RowLabel>
  </Row>
);

/* ---------- project tree ---------- */
const projectNodes: Node[] = [
  { t: "Project1", lvl: 0, icon: "project", exp: "open", group: true },
  { t: "Add new device", lvl: 1, icon: "addDevice" },
  { t: "Devices & networks", lvl: 1, icon: "net" },
  { t: "PLC_1 [CPU 1212C AC/D...", lvl: 1, icon: "plcFolder", exp: "open", group: true, bold: true },
  { t: "Device configuration", lvl: 2, icon: "wrench", sel: true },
  { t: "Online & diagnostics", lvl: 2, icon: "steth" },
  { t: "Program blocks", lvl: 2, icon: "fBlocks", exp: "shut" },
  { t: "Technology objects", lvl: 2, icon: "fTech", exp: "shut" },
  { t: "External source files", lvl: 2, icon: "fExt", exp: "shut" },
  { t: "PLC tags", lvl: 2, icon: "fTags", exp: "shut" },
  { t: "PLC data types", lvl: 2, icon: "fTypes", exp: "shut" },
  { t: "Watch and force tables", lvl: 2, icon: "fWatch", exp: "shut" },
  { t: "Online backups", lvl: 2, icon: "fBackup", exp: "shut" },
  { t: "Traces", lvl: 2, icon: "fTrace", exp: "shut" },
  { t: "Device proxy data", lvl: 2, icon: "fProxy", exp: "shut" },
  { t: "Program info", lvl: 2, icon: "progInfo" },
  { t: "Text lists", lvl: 2, icon: "textList" },
  { t: "Local modules", lvl: 2, icon: "plcFolder", exp: "shut" },
  { t: "Common data", lvl: 1, icon: "fCommon", exp: "shut", group: true },
  { t: "Documentation settings", lvl: 1, icon: "fDoc", exp: "shut", group: true },
  { t: "Languages & resources", lvl: 1, icon: "fLang", exp: "shut", group: true },
  { t: "Online access", lvl: 0, icon: "fOnline", exp: "shut", group: true },
  { t: "Card Reader/USB memory", lvl: 0, icon: "fCard", exp: "shut", group: true },
];

const LeftPanel = styled.section`
  width: 281px;
  flex: none;
  display: flex;
  flex-direction: column;
  background: ${c.panel};
`;
const PanelTools = styled.div`
  height: 34px;
  flex: none;
  display: flex;
  align-items: center;
  gap: 10px;
  padding: 0 9px 0 8px;
  background: ${c.panel};
`;
const BlueToggle = styled.button`
  width: 27px;
  height: 28px;
  display: flex;
  align-items: center;
  justify-content: center;
  background: #f2f5ff;
  border: 2px solid #6a86d8;
  border-radius: 2px;
  margin-right: -4px;
`;
const TreeHead = styled.div`
  height: 27px;
  flex: none;
  background: #c2c2c2;
`;
const TreeBody = styled.div`
  flex: 1;
  min-height: 0;
  display: flex;
  position: relative;
  &::after {
    content: "";
    position: absolute;
    right: 25px;
    top: 0;
    bottom: 0;
    border-left: 1px solid #c6c6c6;
  }
`;
const DevicesTab = styled(Tab)`
  width: 104px;
  margin-left: 8px;
  justify-content: center;
  padding-right: 14px;
`;
const SectionHead = styled.button`
  width: 100%;
  height: 26px;
  flex: none;
  display: flex;
  align-items: center;
  font-size: 17px;
  line-height: 22px;
  font-weight: 600;
  color: #111;
  border-bottom: 2px solid ${c.line};
  ${barFill}
`;
const ChevronCell = styled.span`
  width: 26px;
  align-self: stretch;
  display: flex;
  align-items: center;
  justify-content: center;
  margin-right: 5px;
  border-right: 1px solid ${c.line};
`;
const DetailsFrame = styled.div`
  height: 105px;
  flex: none;
  display: flex;
  flex-direction: column;
  border-top: 4px solid ${c.frame};
`;
const DetailsGap = styled.div`
  height: 31px;
  flex: none;
`;
const DetailsTable = styled.table`
  width: 100%;
  border-collapse: collapse;
  background: ${c.row};
  th {
    height: 24px;
    padding: 0 3px;
    text-align: left;
    font-weight: 400;
    border: 1px solid #b4b4b4;
    border-width: 1px 1px 1px 0;
    background: linear-gradient(#e4e4e4, #d0d0d0 50%, #dedede);
  }
`;
const DetailsBody = styled.div`
  flex: 1;
  background: ${c.row};
`;
const NarrowCol = styled.col`
  width: 24px;
`;
const EndCol = styled.col`
  width: 58px;
`;

const ProjectTree = () => (
  <LeftPanel>
    <PanelTitle>
      <h2>Project tree</h2>
      <Spacer />
      <Columns />
      <TriLeftWhite />
    </PanelTitle>
    <TabStrip>
      <DevicesTab $active>Devices</DevicesTab>
    </TabStrip>
    <PanelTools>
      <PlainButton aria-label="Add object"><Art name="newGrey" /></PlainButton>
      <PlainButton aria-label="Back"><Art name="back" /></PlainButton>
      <PlainButton aria-label="Forward"><Art name="fwd" /></PlainButton>
      <Spacer />
      <BlueToggle aria-label="Details"><Art name="details" w={18} /></BlueToggle>
      <PlainButton aria-label="Show table"><Art name="gotoTable" /></PlainButton>
    </PanelTools>
    <TreeHead />
    <TreeBody>
      <Rows role="tree" aria-label="Project tree" $count={27} $tail={8}>
        {projectNodes.map((n) => <TreeRow key={n.t} n={n} base={3} step={23} />)}
        {[0, 1, 2, 3].map((i) => <Row key={i} $base={0} $step={0} $lvl={0} />)}
      </Rows>
    </TreeBody>
    <ScrollTrack>
      <ScrollButton aria-label="Scroll left"><Chevron dir="left" /></ScrollButton>
      <Thumb $grow={1}><Grip /></Thumb>
      <ScrollButton aria-label="Scroll right"><Chevron dir="right" /></ScrollButton>
    </ScrollTrack>
    <DetailsFrame>
      <SectionHead><ChevronCell><Chevron dir="down" color="#000" w={14} /></ChevronCell>Details view</SectionHead>
      <DetailsGap />
      <DetailsTable>
        <colgroup><NarrowCol /><col /><EndCol /></colgroup>
        <thead><tr><th aria-label="Status" /><th>Name</th><th aria-label="Value" /></tr></thead>
      </DetailsTable>
      <DetailsBody />
    </DetailsFrame>
  </LeftPanel>
);

/* ---------- network editor ---------- */
const Main = styled.main`
  flex: 1;
  min-width: 0;
  display: flex;
  flex-direction: column;
  border: solid ${c.frame};
  border-width: 0 3px 0 4px;
`;
const Crumbs = styled.h1`
  display: flex;
  align-items: center;
  gap: 13px;
  font-size: 16px;
`;
const WinButtons = styled.div`
  display: flex;
  align-items: center;
  gap: 9px;
`;
const ViewTabs = styled(TabStrip)`
  justify-content: flex-end;
  gap: 2px;
  padding-right: 6px;
`;
const EditorRow = styled.div`
  flex: 1;
  min-height: 0;
  display: flex;
  background: ${c.panel};
`;
const EditorCol = styled.div`
  flex: 1;
  min-width: 0;
  display: flex;
  flex-direction: column;
`;
const EditorTools = styled.div`
  height: 36px;
  flex: none;
  display: flex;
  align-items: center;
  padding: 0 19px 0 3px;
  border-bottom: 1px solid #d8d8d8;
`;
const NetToggle = styled.button`
  width: 88px;
  height: 26px;
  display: flex;
  align-items: center;
  gap: 6px;
  padding: 0 2px;
  background: #fff;
  border: 1px solid #c0c0c0;
  border-radius: 2px;
  margin-right: 7px;
`;
const EditGroup = styled(ToolGroup)`
  padding: 0 8px 0 8px;
`;
const Combo = styled.label<{ $w: number; $off?: boolean }>`
  width: ${(p) => p.$w}px;
  height: 22px;
  flex: none;
  display: flex;
  border: 1px solid ${c.line};
  background: ${(p) => (p.$off ? "#e6e6e6" : "#fff")};
  color: ${(p) => (p.$off ? "#8e8e8e" : c.ink)};
  select {
    flex: 1;
    min-width: 0;
    appearance: none;
    padding-left: 4px;
    opacity: 1;
  }
`;
const ComboArrow = styled.span`
  width: 20px;
  display: flex;
  align-items: center;
  justify-content: center;
  border-left: 1px solid ${c.line};
  background: linear-gradient(#f0f0f0, #cfcfcf);
`;
const CanvasRow = styled.div`
  flex: 1;
  min-height: 0;
  display: flex;
`;
const Canvas = styled.div`
  flex: 1;
  min-width: 0;
  position: relative;
  overflow: hidden;
  display: flex;
  flex-direction: column;
  background: #fff;
`;
const Band = styled.div<{ $h: number; $gap: number }>`
  height: ${(p) => p.$h}px;
  margin-bottom: ${(p) => p.$gap}px;
  flex: none;
  background: repeating-linear-gradient(#e4e4e4 0 1px, #f2f2f2 1px 2px, #fff 2px 10px);
`;
const FirstGap = styled.div`
  height: 8px;
  flex: none;
`;
const DeviceBox = styled.div`
  position: absolute;
  left: 15px;
  top: 44px;
  width: 206px;
  display: grid;
  grid-template-rows: 22px 64px 23px;
  gap: 1px;
`;
const DevicePart = styled.div`
  background: #c9cbd9;
  display: flex;
  justify-content: space-between;
  padding: 0 25px 0 5px;
`;
const DeviceName = styled.div`
  font-weight: 600;
`;

const CpuPicture = () => (
  <Icon w={50} h={55}>
    <rect width="50" height="55" fill="#627585" />
    <path d="M0 0.500h50M0 1.500h38" stroke="#3f4f5c" />
    <rect x="4" y="5" width="10" height="3" fill="#12858c" />
    <path d="M0 19.500h50M0 35.500h50" stroke="#3f4f5c" strokeWidth="1.200" />
    <path d="M0 18h10M29 18h21M29 34h21" stroke="#a9b5bf" strokeWidth="1.500" strokeDasharray="2 1" />
    <path d="M11 18h16M0 34h27" stroke="#8c9aa6" />
    <path d="M10.500 18v17M28 18v17" stroke="#3f4f5c" strokeWidth="1.200" />
    <rect x="5" y="38.500" width="12" height="12" fill="#5d6f7e" stroke="#00d42a" strokeWidth="2.500" />
    <path d="M0 54h50" stroke="#0c1014" strokeWidth="2" />
  </Icon>
);

const BottomRow = styled.div`
  height: 23px;
  flex: none;
  display: flex;
`;
const BottomScroll = styled(ScrollTrack)`
  flex: 1;
  margin-right: 8px;
`;
const SliderCell = styled.div`
  width: 129px;
  padding: 2px 22px 0 24px;
`;
const Slider = styled.input`
  display: block;
  width: 83px;
  height: 14px;
  appearance: none;
  background: linear-gradient(#777, #777) center / 100% 1px no-repeat;
  &::-webkit-slider-thumb {
    appearance: none;
    width: 9px;
    height: 14px;
    background: linear-gradient(#fff, #bdbdbd);
    border: 1px solid #8a8a8a;
    clip-path: polygon(0 0, 100% 0, 100% 65%, 50% 100%, 0 65%);
  }
`;
const Corner = styled.div`
  width: 22px;
  display: flex;
  align-items: center;
  justify-content: center;
  background: #fff;
`;
const Splitter = styled.div`
  width: 10px;
  flex: none;
  margin-top: 3px;
  display: flex;
  flex-direction: column;
  justify-content: center;
  background: linear-gradient(90deg, #8a8a8a 1px, #f8f8f8 1px 2px, #dadada 2px);
  border-top: 1px solid ${c.line};
`;
const SplitButton = styled.button<{ $on?: boolean }>`
  height: 30px;
  margin: 0 0 12px 2px;
  display: flex;
  align-items: center;
  justify-content: center;
  border: 1px solid ${c.line};
  border-width: 1px 0;
  background: ${(p) => (p.$on ? "#b4b4b4" : "#cccccc")};
`;
const NetworkData = styled.button`
  width: 23px;
  flex: none;
  margin-top: 3px;
  display: flex;
  align-items: center;
  justify-content: center;
  background: ${c.bar};
  color: #f4f4f4;
  span {
    writing-mode: vertical-rl;
    line-height: 20px;
    font-weight: 500;
  }
`;
const Inspector = styled.div`
  height: 35px;
  flex: none;
  display: flex;
  align-items: flex-end;
  justify-content: flex-end;
  gap: 2px;
  padding-right: 6px;
  background: ${c.bar};
  border-top: 3px solid ${c.frame};
`;
const InspectorIcons = styled.div`
  width: 83px;
  height: 34px;
  display: flex;
  align-items: center;
  justify-content: flex-end;
  gap: 9px;
`;

const NetworkEditor = () => (
  <Main>
    <PanelTitle $active>
      <Crumbs>
        <span>Project1</span>
        <Icon w={6} h={10}><path d="M0 0l5 5-5 5z" fill="#fff" /></Icon>
        <span>Devices &amp; networks</span>
      </Crumbs>
      <Spacer />
      <WinButtons>
        <PlainButton aria-label="Minimize"><Icon w={14} h={15}><path d="M0 12.500h14" stroke="#fff" strokeWidth="4" /></Icon></PlainButton>
        <PlainButton aria-label="Restore"><Cascade /></PlainButton>
        <PlainButton aria-label="Maximize"><Icon w={14} h={15}><path d="M0 1h14" stroke="#fff" strokeWidth="2" /><rect y="3" width="14" height="11" fill="#fff" /></Icon></PlainButton>
        <PlainButton aria-label="Close"><Icon w={14} h={15}><path d="M1 1l12 13M13 1L1 14" stroke="#fff" strokeWidth="2.400" /></Icon></PlainButton>
      </WinButtons>
    </PanelTitle>
    <ViewTabs>
      <Tab $w={173}><Art name="topo" />Topology view</Tab>
      <Tab $w={168} $active><Art name="net" />Network view</Tab>
      <Tab $w={152}><Art name="wrench" />Device view</Tab>
    </ViewTabs>
    <EditorRow>
      <EditorCol>
        <EditorTools>
          <NetToggle><Art name="netCursor" />Network</NetToggle>
          <EditGroup>
            <PlainButton $w={107}><Art name="conn" w={18} />Connections</PlainButton>
            <Combo $w={194} $off>
              <select disabled aria-label="Connection type"><option>HMI connection</option></select>
              <ComboArrow><Icon w={9} h={6}><path d="M0 0h9L4.500 6z" fill="#777" /></Icon></ComboArrow>
            </Combo>
          </EditGroup>
          <EditGroup><PlainButton aria-label="Name"><Art name="nameTag" /></PlainButton></EditGroup>
          <EditGroup>
            <PlainButton aria-label="Show addresses"><Art name="addr" /></PlainButton>
            <PlainButton aria-label="Page breaks"><Art name="pageBreak" /></PlainButton>
          </EditGroup>
          <EditGroup $gap={5}>
            <PlainButton aria-label="Zoom in"><Art name="zoom" w={18} /></PlainButton>
            <PlainButton aria-label="Zoom list"><DropMark color="#000" /></PlainButton>
          </EditGroup>
          <Spacer />
          <PlainButton aria-label="Remember layout"><Art name="lockTable" /></PlainButton>
        </EditorTools>
        <CanvasRow>
          <Canvas>
            <FirstGap />
            <Band $h={32} $gap={138} />
            <Band $h={102} $gap={141} />
            <Band $h={102} $gap={140} />
            <Band $h={102} $gap={0} />
            <DeviceBox>
              <DevicePart />
              <DevicePart>
                <div>
                  <DeviceName>PLC_1</DeviceName>
                  <div>CPU 1212C</div>
                </div>
                <CpuPicture />
              </DevicePart>
              <DevicePart />
            </DeviceBox>
          </Canvas>
          <ScrollTrack $v>
            <ScrollButton aria-label="Scroll up"><Chevron dir="up" /></ScrollButton>
            <Thumb $v $grow={108}><Grip v /></Thumb>
            <Rest $grow={588} />
            <ScrollButton aria-label="Scroll down"><Chevron dir="down" /></ScrollButton>
          </ScrollTrack>
        </CanvasRow>
        <BottomRow>
          <BottomScroll>
            <ScrollButton aria-label="Scroll left"><Chevron dir="left" /></ScrollButton>
            <Thumb $grow={95}><Grip /></Thumb>
            <Rest $grow={686} />
            <ScrollButton aria-label="Scroll right"><Chevron dir="right" /></ScrollButton>
          </BottomScroll>
          <Combo $w={194}>
            <select aria-label="Zoom factor"><option>100%</option></select>
            <ComboArrow><Icon w={10} h={6}><path d="M0 0h10L5 6z" fill="#000" /></Icon></ComboArrow>
          </Combo>
          <SliderCell>
            <Slider type="range" min={0} max={100} defaultValue={50} aria-label="Zoom" />
            <Icon w={83} h={5}><path d="M1 0v4M14 0v4M28 0v4M41 0v4M55 0v4M68 0v4M82 0v4" stroke="#222" strokeWidth="1.500" /></Icon>
          </SliderCell>
          <Corner><Art name="overviewPane" w={18} /></Corner>
        </BottomRow>
      </EditorCol>
      <Splitter>
        <SplitButton $on aria-label="Expand left"><Icon w={5} h={8}><path d="M5 0v8L1 4z" fill="#000" /></Icon></SplitButton>
        <SplitButton aria-label="Expand right"><Icon w={5} h={8}><path d="M0 0v8l4-4z" fill="#777" /></Icon></SplitButton>
      </Splitter>
      <NetworkData><span>Network data</span></NetworkData>
    </EditorRow>
    <Inspector>
      <Tab $tool $w={140}><Art name="props" />Properties</Tab>
      <Tab $tool $w={95}><Art name="info" />Info<Spacer /><Art name="infoBadge" w={16} /></Tab>
      <Tab $tool $w={152}><Art name="steth" />Diagnostics</Tab>
      <InspectorIcons>
        <Cascade />
        <Icon w={14} h={7}><rect x="1" y="1" width="12" height="5" fill="none" stroke="#fff" strokeWidth="2" /></Icon>
        <Icon w={15} h={9}><path d="M0 8h15L7.500 0z" fill="#fff" /></Icon>
      </InspectorIcons>
    </Inspector>
  </Main>
);

/* ---------- hardware catalog ---------- */
const dataMan = ["200", "200 PDEV", "260", "300", "300 PDEV", "470", "500", "500 PDEV", "60", "60 PDEV", "8000", "8000 PDEV"];
const catalogNodes: Node[] = [
  { t: "PROFINET IO", lvl: 0, icon: "plcFolder", exp: "open" },
  ...["Controllers", "Drives", "Encoders", "Gateway", "General", "I/O", "Ident Systems"].map(
    (t): Node => ({ t, lvl: 1, icon: "plcFolder", exp: "shut" }),
  ),
  { t: "Sensors", lvl: 1, icon: "plcFolder", exp: "open" },
  { t: "Cognex Corp", lvl: 2, icon: "plcFolder", exp: "open" },
  { t: "Cognex ID Readers", lvl: 3, icon: "plcFolder", exp: "open" },
  ...dataMan.map((m): Node => ({ t: `DataMan ${m}`, lvl: 4, icon: "device" })),
  { t: "Cognex Corp.", lvl: 2, icon: "plcFolder", exp: "open" },
  { t: "Cognex Checkers", lvl: 3, icon: "plcFolder", exp: "shut", sel: true },
  { t: "Cognex Vision Sensors", lvl: 3, icon: "plcFolder", exp: "shut" },
  { t: "SIEMENS AG", lvl: 2, icon: "plcFolder", exp: "shut" },
  { t: "PROFIBUS DP", lvl: 0, icon: "plcFolder", exp: "shut" },
];

const RightPanel = styled.section`
  width: 357px;
  flex: none;
  display: flex;
  flex-direction: column;
  background: ${c.panel};
`;
const OptionsHead = styled.div`
  height: 35px;
  flex: none;
  display: flex;
  align-items: center;
  padding-left: 7px;
  color: #111;
  border-top: 4px solid ${c.navy};
  border-bottom: 1px solid ${c.line};
  background: linear-gradient(#f6f6f6, #ececec 50%, #dfdfdf 51%, #e2e2e2);
`;
const OptionsTitle = styled.h2`
  font-size: 16px;
`;
const OptionsTools = styled.div`
  height: 35px;
  flex: none;
  display: flex;
  align-items: flex-start;
  justify-content: flex-end;
  padding: 3px 6px 0 0;
  border-bottom: 3px solid #9c9c9c;
`;
const SearchRow = styled.div`
  flex: none;
  display: flex;
  gap: 6px;
  padding: 5px 6px 0 5px;
`;
const SearchInput = styled.input`
  flex: 1;
  min-width: 0;
  height: 25px;
  padding: 0 3px;
  background: #fff;
  border: 2px solid #a0a0a0;
`;
const SearchButton = styled.button`
  width: 29px;
  height: 25px;
  display: flex;
  align-items: center;
  justify-content: center;
  border: 1px solid ${c.line};
  border-radius: 2px;
  background: linear-gradient(#f0f0f0, #cdcdcd);
`;
const FilterRow = styled.label`
  height: 33px;
  flex: none;
  display: flex;
  align-items: center;
  gap: 6px;
  padding: 4px 0 0 6px;
`;
const FilterBox = styled.input`
  appearance: none;
  width: 18px;
  height: 18px;
  display: grid;
  place-content: center;
  border: 2px solid #5d7396;
  border-radius: 2px;
  background: linear-gradient(#a8d2f2, #5fd8f4);
  &:checked::before {
    content: "";
    width: 6px;
    height: 11px;
    margin-top: -3px;
    border: solid #14428a;
    border-width: 0 3px 3px 0;
    transform: rotate(45deg);
  }
`;
const CatalogBody = styled.div`
  flex: 1;
  min-height: 0;
  display: flex;
  padding: 0 7px 0 5px;
`;
const InfoWrap = styled.div`
  flex: none;
  border-top: 3px solid #9c9c9c;
`;

const HardwareCatalog = () => (
  <RightPanel>
    <PanelTitle>
      <h2>Hardware catalog</h2>
      <Spacer />
      <Cascade />
      <Columns />
      <TriRightWhite />
    </PanelTitle>
    <OptionsHead><OptionsTitle>Options</OptionsTitle></OptionsHead>
    <OptionsTools><PlainButton aria-label="Catalog window"><Art name="window" /></PlainButton></OptionsTools>
    <SectionHead><ChevronCell><Chevron dir="down" color="#000" w={14} /></ChevronCell>Catalog</SectionHead>
    <SearchRow>
      <SearchInput type="text" defaultValue="data" aria-label="Search catalog" />
      <SearchButton aria-label="Search down"><Art name="searchDown" /></SearchButton>
      <SearchButton aria-label="Search up"><Art name="searchUp" /></SearchButton>
    </SearchRow>
    <FilterRow><FilterBox type="checkbox" defaultChecked />Filter</FilterRow>
    <CatalogBody>
      <Rows role="tree" aria-label="Catalog" $count={28} $tail={18}>
        {catalogNodes.map((n) => <TreeRow key={n.t} n={n} base={22} step={20} soft />)}
      </Rows>
      <ScrollTrack $v>
        <ScrollButton aria-label="Scroll up"><Chevron dir="up" /></ScrollButton>
        <Rest $grow={154} />
        <Thumb $v $grow={480}><Grip v /></Thumb>
        <ScrollButton aria-label="Scroll down"><Chevron dir="down" /></ScrollButton>
      </ScrollTrack>
    </CatalogBody>
    <InfoWrap>
      <SectionHead><ChevronCell><Chevron dir="right" color="#000" w={14} /></ChevronCell>Information</SectionHead>
    </InfoWrap>
  </RightPanel>
);

/* ---------- right rail ---------- */
const RightRail = styled.aside`
  width: 31px;
  flex: none;
  display: flex;
  flex-direction: column;
  gap: 3px;
  padding: 37px 4px 0 0;
  background: ${c.bar};
  border-left: 1px solid ${c.frame};
`;
const CardTab = styled.button<{ $h: number; $active?: boolean }>`
  height: ${(p) => p.$h}px;
  flex: none;
  display: flex;
  flex-direction: column;
  align-items: center;
  gap: 5px;
  padding-top: 1px;
  border: 2px solid ${c.line};
  border-left: 0;
  background: ${(p) => (p.$active ? "#f0f0f0" : "linear-gradient(90deg, #dcdcdc 50%, #e6e6e6 51%)")};
  span {
    writing-mode: vertical-rl;
    font-size: 16px;
    line-height: 22px;
    font-weight: 700;
    color: ${(p) => (p.$active ? "#000" : c.grey)};
  }
`;

/* ---------- status bar ---------- */
const StatusBar = styled.footer`
  height: 34px;
  flex: none;
  display: flex;
  align-items: center;
  background: ${c.black};
`;
const PortalView = styled.button`
  width: 225px;
  display: flex;
  align-items: center;
  gap: 13px;
  padding: 3px 0 0 44px;
  font-size: 17px;
  line-height: 22px;
  font-weight: 600;
  color: #f0f0f0;
`;
const TaskButton = styled.button<{ $active?: boolean }>`
  width: 142px;
  height: 26px;
  display: flex;
  align-items: center;
  gap: 5px;
  padding: 0 4px;
  margin-right: 3px;
  color: ${c.ink};
  background: ${(p) => (p.$active ? "#fff" : "#c0c0c0")};
  font-weight: ${(p) => (p.$active ? 500 : 400)};
`;
const StatusText = styled.div`
  width: 386px;
  display: flex;
  align-items: center;
  gap: 6px;
  padding-top: 4px;
  color: #e8e8e8;
`;

export default function App() {
  return (
    <Shell>
      <Global />
      <Defs />
      <TopArea />
      <Work>
        <LeftRail>
          <RailCap />
          <RailTab><RailText>Devices &amp; networks</RailText></RailTab>
        </LeftRail>
        <ProjectTree />
        <NetworkEditor />
        <HardwareCatalog />
        <RightRail>
          <CardTab $h={201} $active><Art name="hwBook" /><span>Hardware catalog</span></CardTab>
          <CardTab $h={154}><Art name="steth" /><span>Online tools</span></CardTab>
          <CardTab $h={98}><Art name="tasks" /><span>Tasks</span></CardTab>
          <CardTab $h={125}><Art name="openBook" /><span>Libraries</span></CardTab>
        </RightRail>
      </Work>
      <StatusBar>
        <PortalView><TriLeftWhite />Portal view</PortalView>
        <TaskButton><Art name="overview" />Overview</TaskButton>
        <TaskButton $active><Art name="net" />Devices &amp; ne...</TaskButton>
        <Spacer />
        <StatusText><Art name="ok" />Project Project1 opened.</StatusText>
      </StatusBar>
    </Shell>
  );
}
